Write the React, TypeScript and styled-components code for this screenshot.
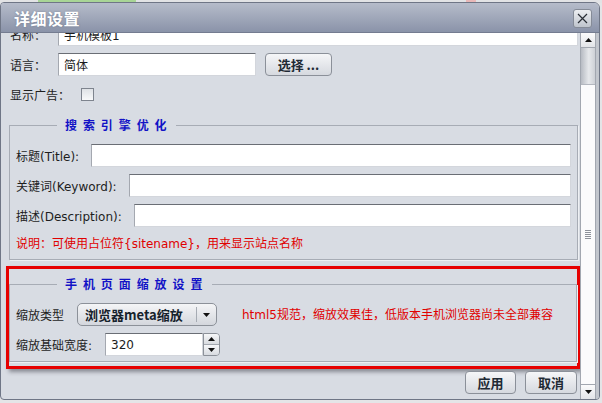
import React from 'react';
import styled, { createGlobalStyle } from 'styled-components';

const GlobalStyle = createGlobalStyle`
  html, body {
    margin: 0;
    padding: 0;
  }
  body {
    width: 602px;
    height: 403px;
    overflow: hidden;
    background: #e4e5e7;
    background-image: linear-gradient(to right, #e2e3e5 0 38px, #a8d596 38px 136px, #e2e3e5 136px 466px, #e9b8b8 466px 476px, #e2e3e5 476px);
    background-size: 100% 3px;
    background-repeat: no-repeat;
    font-family: "DejaVu Sans", "Noto Sans CJK SC", sans-serif;
    font-size: 12px;
    color: #1c1c1c;
  }
`;

const Dialog = styled.div`
  margin-top: 2px;
  width: 600px;
  height: 398px;
  box-sizing: border-box;
  border: 1px solid #6f7686;
  border-radius: 4px 6px 4px 4px;
  overflow: hidden;
  display: flex;
  flex-direction: column;
  background: #d8dce3;
`;

const TitleBar = styled.div`
  flex: none;
  height: 29px;
  border-bottom: 1px solid #747c90;
  padding: 0 7px 0 13px;
  display: flex;
  align-items: center;
  justify-content: space-between;
  background: linear-gradient(#b6bcca, #8a93a9);
`;

const Title = styled.span`
  font: bold 16px "Noto Sans CJK SC", sans-serif;
  color: #fff;
  text-shadow: 0 0 2px rgba(70, 80, 100, 0.5);
  letter-spacing: 0.5px;
`;

const CloseButton = styled.button`
  width: 19px;
  height: 19px;
  padding: 0;
  margin-top: 1px;
  box-sizing: border-box;
  border: 1px solid #858b97;
  border-radius: 3px;
  background: linear-gradient(#eceef1, #bfc4cd);
  display: flex;
  align-items: center;
  justify-content: center;
`;

const Body = styled.div`
  flex: 1;
  min-height: 0;
  display: flex;
`;

const Content = styled.div`
  flex: 1;
  min-width: 0;
  overflow: hidden;
`;

// scrolled down a little, as in the shot
const Inner = styled.div`
  margin-top: -16px;
  padding: 6px 2px 0 8px;
  display: flex;
  flex-direction: column;
`;

const TopFields = styled.div`
  display: flex;
  flex-direction: column;
  gap: 7px;
  padding-left: 1px;
`;

const Row = styled.div<{ $gap?: number }>`
  display: flex;
  align-items: center;
  gap: ${(p) => p.$gap ?? 12}px;
  height: 23px;
`;

const Label = styled.span<{ $w?: number }>`
  flex: none;
  white-space: nowrap;
  color: #1e1e1e;
  ${(p) => (p.$w ? `width: ${p.$w}px;` : '')}
`;

const TextInput = styled.input<{ $w?: number }>`
  box-sizing: border-box;
  height: 23px;
  margin: 0;
  border: 1px solid #d3d6dc;
  border-top-color: #6a6e75;
  border-left-color: #a4a8b0;
  background: #fff;
  padding: 0 5px;
  font: 12px "DejaVu Sans", "Noto Sans CJK SC", sans-serif;
  color: #1c1c1c;
  outline: none;
  ${(p) => (p.$w ? `width: ${p.$w}px; flex: none;` : 'flex: 1; min-width: 0;')}
`;

const SmallButton = styled.button<{ $w: number }>`
  width: ${(p) => p.$w}px;
  height: 23px;
  padding: 0;
  box-sizing: border-box;
  border: 1px solid #8b9099;
  border-radius: 4px;
  background: linear-gradient(#f5f6f8, #d6d9df);
  font: bold 13px "Noto Sans CJK SC", sans-serif;
  color: #1f2a34;
  flex: none;
`;

const Check = styled.input`
  appearance: none;
  margin: 0;
  width: 13px;
  height: 13px;
  box-sizing: border-box;
  border: 1px solid #7e848e;
  background: linear-gradient(#dfe2e6, #f8f9fa);
`;

const Group = styled.fieldset<{ $mt: number; $pt: number; $pb: number }>`
  margin: ${(p) => p.$mt}px 0 0 0;
  padding: ${(p) => p.$pt}px 6px ${(p) => p.$pb}px 6px;
  border: 1px solid #a7acb5;
  box-shadow: 1px 1px 0 #eef0f3;
  display: flex;
  flex-direction: column;
  gap: 7px;
  min-width: 0;
`;

const Legend = styled.legend`
  margin-left: 41px;
  padding: 0 8px;
  font: bold 12px "Noto Sans CJK SC", sans-serif;
  line-height: 14px;
  letter-spacing: 1.6px;
  color: #1212c6;
`;

const Note = styled.div<{ $ml?: number; $mt?: number }>`
  color: #e00000;
  line-height: 16px;
  white-space: nowrap;
  margin-left: ${(p) => p.$ml ?? 0}px;
  margin-top: ${(p) => p.$mt ?? 0}px;
`;

const Highlight = styled.div`
  margin: 6px -2px 0 -3px;
  border: 3px solid #e60000;
  box-shadow: 3px 3px 4px rgba(40, 40, 50, 0.45);
  padding: 0 0 4px 0;
`;

const Select = styled.div`
  width: 140px;
  height: 23px;
  box-sizing: border-box;
  border: 1px solid #8c9199;
  border-radius: 5px;
  background: linear-gradient(#f4f5f7, #d4d7dd);
  display: flex;
  align-items: center;
  flex: none;
`;

const SelectText = styled.span`
  flex: 1;
  padding-left: 7px;
  font: bold 13px "Noto Sans CJK SC", sans-serif;
  color: #16222c;
  white-space: nowrap;
`;

const SelectArrow = styled.span`
  width: 19px;
  height: 15px;
  border-left: 1px solid #a6abb3;
  display: flex;
  align-items: center;
  justify-content: center;
`;

const Spinner = styled.div`
  display: flex;
  flex: none;
`;

const SpinButtons = styled.div`
  width: 17px;
  height: 23px;
  box-sizing: border-box;
  border: 1px solid #8c9199;
  border-radius: 0 4px 4px 0;
  display: flex;
  flex-direction: column;
  overflow: hidden;
`;

const SpinHalf = styled.div<{ $down?: boolean }>`
  flex: 1;
  display: flex;
  align-items: center;
  justify-content: center;
  background: linear-gradient(#f6f7f9, #d8dbe0);
  border-top: ${(p) => (p.$down ? '1px solid #a3a8b0' : 'none')};
`;

const Actions = styled.div`
  margin-top: 2px;
  padding-right: 1px;
  display: flex;
  justify-content: flex-end;
  gap: 9px;
`;

const Scrollbar = styled.div`
  flex: none;
  width: 16px;
  box-sizing: border-box;
  border-left: 1px solid #a2a7b0;
  border-right: 1px solid #a2a7b0;
  display: flex;
  flex-direction: column;
  background: #f6f7f8;
`;

const ScrollButton = styled.div<{ $down?: boolean }>`
  height: 15px;
  flex: none;
  box-sizing: border-box;
  display: flex;
  align-items: center;
  justify-content: center;
  background: linear-gradient(#fbfbfc, #e2e4e8);
  ${(p) => (p.$down ? 'border-top: 1px solid #a2a7b0;' : 'border-bottom: 1px solid #a2a7b0;')}
`;

const Track = styled.div`
  height: 36px;
  flex: none;
  background: linear-gradient(to right, #b7bbc3, #e6e8eb 55%, #cdd0d6);
`;

const Thumb = styled.div`
  flex: 1;
  background: #fbfbfc;
  border-top: 1px solid #b3b7bf;
  display: flex;
  align-items: center;
  justify-content: center;
`;

const Grip = styled.div`
  width: 6px;
  height: 9px;
  background: repeating-linear-gradient(#8d929a 0 1px, transparent 1px 2px);
`;

const Frame = styled.div`
  flex: none;
  width: 3px;
  background: #c2c6cd;
`;

const Tri = ({ down }: { down?: boolean }) => (
  <svg width="7" height="4" viewBox="0 0 7 4">
    <polygon points={down ? '0,0 7,0 3.5,4' : '0,4 7,4 3.5,0'} fill="#111" />
  </svg>
);

const App: React.FC = () => {
  return (
    <>
      <GlobalStyle />
      <Dialog>
        <TitleBar>
          <Title>详细设置</Title>
          <CloseButton>
            <svg width="11" height="11" viewBox="0 0 11 11">
              <path d="M1 1 L10 10 M10 1 L1 10" stroke="#2a2e36" strokeWidth="1.2" />
            </svg>
          </CloseButton>
        </TitleBar>
        <Body>
          <Content>
            <Inner>
              <TopFields>
                <Row $gap={9}>
                  <Label $w={39}>名称：</Label>
                  <TextInput defaultValue="手机模板1" />
                </Row>
                <Row $gap={9}>
                  <Label $w={39}>语言：</Label>
                  <TextInput $w={198} defaultValue="简体" />
                  <SmallButton $w={67}>选择 ...</SmallButton>
                </Row>
                <Row $gap={11}>
                  <Label>显示广告：</Label>
                  <Check type="checkbox" />
                </Row>
              </TopFields>

              <Group $mt={12} $pt={12} $pb={7}>
                <Legend>搜 索 引 擎 优 化</Legend>
                <Row>
                  <Label>标题(Title):</Label>
                  <TextInput />
                </Row>
                <Row>
                  <Label>关键词(Keyword):</Label>
                  <TextInput />
                </Row>
                <Row>
                  <Label>描述(Description):</Label>
                  <TextInput />
                </Row>
                <Note $mt={2}>说明：可使用占位符{'{sitename}'}，用来显示站点名称</Note>
              </Group>

              <Highlight>
                <Group $mt={8} $pt={12} $pb={5}>
                  <Legend>手 机 页 面 缩 放 设 置</Legend>
                  <Row $gap={13}>
                    <Label>缩放类型</Label>
                    <Select>
                      <SelectText>浏览器meta缩放</SelectText>
                      <SelectArrow>
                        <Tri down />
                      </SelectArrow>
                    </Select>
                    <Note $ml={12}>html5规范，缩放效果佳，低版本手机浏览器尚未全部兼容</Note>
                  </Row>
                  <Row $gap={13}>
                    <Label>缩放基础宽度:</Label>
                    <Spinner>
                      <TextInput $w={98} defaultValue="320" />
                      <SpinButtons>
                        <SpinHalf>
                          <Tri />
                        </SpinHalf>
                        <SpinHalf $down>
                          <Tri down />
                        </SpinHalf>
                      </SpinButtons>
                    </Spinner>
                  </Row>
                </Group>
              </Highlight>

              <Actions>
                <SmallButton $w={51}>应用</SmallButton>
                <SmallButton $w={52}>取消</SmallButton>
              </Actions>
            </Inner>
          </Content>
          <Scrollbar>
            <ScrollButton>
              <Tri />
            </ScrollButton>
            <Track />
            <Thumb>
              <Grip />
            </Thumb>
            <ScrollButton $down>
              <Tri down />
            </ScrollButton>
          </Scrollbar>
          <Frame />
        </Body>
      </Dialog>
    </>
  );
};

export default App;
